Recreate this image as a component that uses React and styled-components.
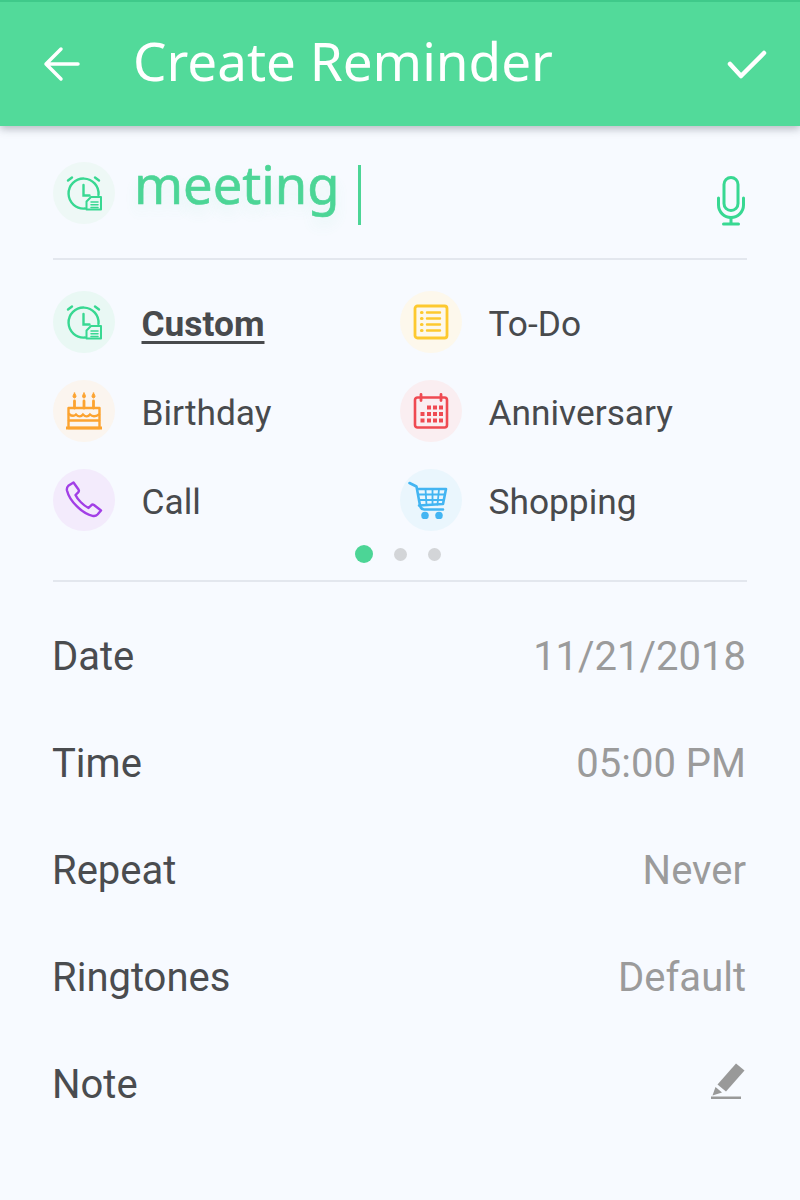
import styled, { createGlobalStyle } from "styled-components";

const GREEN = "#52da9a";

const types = [
    { label: "Custom", tint: "#e9f8f4", icon: "alarm", active: true },
    { label: "To-Do", tint: "#fdf8ec", icon: "todo" },
    { label: "Birthday", tint: "#fbf5ef", icon: "cake" },
    { label: "Anniversary", tint: "#faeef1", icon: "calendar" },
    { label: "Call", tint: "#f3ebfc", icon: "phone" },
    { label: "Shopping", tint: "#eaf6fd", icon: "cart" }
];

const settings = [
    { label: "Date", value: "11/21/2018" },
    { label: "Time", value: "05:00 PM" },
    { label: "Repeat", value: "Never" },
    { label: "Ringtones", value: "Default" }
];

const GlobalStyle = createGlobalStyle`
  html, body {
    margin: 0;
    padding: 0;
    background: #f7faff;
  }
`;

const AlarmIcon = ({ color = "#38d892", size = 36 }) => (
    <svg width={size} height={size} viewBox="0 0 36 36" fill="none" stroke={color} strokeWidth="2.400" strokeLinecap="round">
        <path d="M19 33.500A15 15 0 1 1 32.500 20" />
        <path d="M17.500 10v10.500h6" />
        <path d="M2 5.500 6 2.500M33 5.500 29 2.500" />
        <path d="M20.500 34.500v-8l4.500-4.500h10v12.500z" fill="#e9f8f4" strokeLinejoin="round" strokeWidth="2" />
        <path d="M25 27h7M25 29.800h7M25 32.500h7" strokeWidth="1.500" />
    </svg>
);

const TodoIcon = () => (
    <svg width="36" height="36" viewBox="0 0 36 36" fill="none" stroke="#fdc92f" strokeWidth="2.800" strokeLinecap="round">
        <rect x="2" y="2" width="32" height="32" rx="2.500" />
        <path d="M14 8.500h13M14 14.500h13M14 20.500h13M14 26.500h13" strokeWidth="2.400" />
        <path d="M8.500 8.500h.5M8.500 14.500h.5M8.500 20.500h.5M8.500 26.500h.5" strokeWidth="3.200" />
    </svg>
);

const CakeIcon = () => (
    <svg width="36" height="38" viewBox="0 0 36 38" fill="none" stroke="#fca32f" strokeWidth="2.400" strokeLinecap="round">
        <path d="M2.500 16h31v20h-31z" strokeLinejoin="round" />
        <path d="M3 22c3 2.500 5 2.500 7 .5 2.500 2.500 5 2.500 7 0 2.500 2.500 5 2.500 7 0 2.500 2.500 5 2.500 9 0" />
        <path d="M3 28.500h30" />
        <path d="M0.500 36h35" strokeWidth="3.200" />
        <path d="M8.500 16V9M18 16V9M27.500 16V9" strokeWidth="2.800" />
        <path d="M8.500 1c-2 3-2 4.500 0 5 2-.5 2-2 0-5zM18 1c-2 3-2 4.500 0 5 2-.5 2-2 0-5zM27.500 1c-2 3-2 4.500 0 5 2-.5 2-2 0-5z" fill="#fca32f" strokeWidth="1" />
    </svg>
);

const CalendarIcon = () => (
    <svg width="36" height="36" viewBox="0 0 36 36" fill="none" stroke="#ef4a52" strokeWidth="2.600" strokeLinecap="round">
        <rect x="2" y="4.500" width="32" height="30" rx="2.500" />
        <path d="M8 1.500v6M28 1.500v6" strokeWidth="2.800" />
        <g fill="#ef4a52" stroke="none">
            {[
                [14, 12.500], [20, 12.500], [26, 12.500],
                [7.500, 19], [14, 19], [20, 19], [26, 19],
                [7.500, 25.500], [14, 25.500], [20, 25.500], [26, 25.500]
            ].map(([x, y]) => (
                <rect key={`${x}-${y}`} x={x} y={y} width="4" height="4" />
            ))}
        </g>
    </svg>
);

const PhoneIcon = () => (
    <svg width="38" height="38" viewBox="0 0 38 38" fill="none" stroke="#a23fe6" strokeWidth="2.400" strokeLinejoin="round">
        <path d="M8.500 1.500 13.500 8.500c.6 1 .5 2-.3 2.800L10.500 14c2 4.500 8 10.500 13 13l2.700-2.700c.8-.8 1.800-.9 2.800-.3l7 5.500-3.500 4c-1.300 1.300-3 1.800-5 1.300C17 32.500 4.500 20 2 9.500 1.600 7.500 2 6 3.300 4.800z" />
    </svg>
);

const CartIcon = () => (
    <svg width="46" height="38" viewBox="0 0 46 38" fill="none" stroke="#43b5f2" strokeWidth="2.600" strokeLinecap="round" strokeLinejoin="round">
        <path d="M1.500 2l7 3.500 3.500 19c.4 2 1.500 4 4 4h19" />
        <path d="M10 8h28l-3 15-24 1.500" />
        <path d="M10.500 13.500h26M11.500 19h24M17.500 8l1 16M24.500 8v15.500M31 8l-1.500 15.500" strokeWidth="1.800" />
        <circle cx="17" cy="34.500" r="2.500" fill="#43b5f2" />
        <circle cx="31" cy="34.500" r="2.500" fill="#43b5f2" />
    </svg>
);

const typeIcons = {
    alarm: <AlarmIcon />,
    todo: <TodoIcon />,
    cake: <CakeIcon />,
    calendar: <CalendarIcon />,
    phone: <PhoneIcon />,
    cart: <CartIcon />
};

const App = () => {
    return (
        <Screen>
            <GlobalStyle />
            <Header>
                <svg width="38" height="36" viewBox="0 0 38 36" fill="none" stroke="#fff" strokeWidth="3.500" strokeLinecap="round" strokeLinejoin="round">
                    <path d="M35 18H3M18 3 3 18l15 15" />
                </svg>
                <Title>Create Reminder</Title>
                <svg width="40" height="29" viewBox="0 0 40 29" fill="none" stroke="#fff" strokeWidth="4.500" strokeLinecap="round" strokeLinejoin="round">
                    <path d="M3 14l11 12L37 3" />
                </svg>
            </Header>
            <Content>
                <InputRow>
                    <IconCircle $tint="#eef8f6"><AlarmIcon /></IconCircle>
                    <MeetingText>meeting</MeetingText>
                    <Caret />
                    <MicSlot>
                        <svg width="28" height="50" viewBox="0 0 28 50" fill="none" stroke="#38d892" strokeWidth="3" strokeLinecap="round">
                            <rect x="7" y="1.500" width="14" height="33" rx="7" />
                            <path d="M1.500 22v7a12.500 12.500 0 0 0 25 0v-7" />
                            <path d="M14 41.500v6.500M6.500 48h15" />
                        </svg>
                    </MicSlot>
                </InputRow>
                <TypesPanel>
                    <TypeGrid>
                        {types.map((t) => (
                            <TypeItem key={t.label}>
                                <IconCircle $tint={t.tint}>{typeIcons[t.icon]}</IconCircle>
                                <TypeLabel $active={t.active}>{t.label}</TypeLabel>
                            </TypeItem>
                        ))}
                    </TypeGrid>
                    <Dots>
                        <Dot $active />
                        <Dot />
                        <Dot />
                    </Dots>
                </TypesPanel>
                <SettingsList>
                    {settings.map((s) => (
                        <SettingRow key={s.label}>
                            <span>{s.label}</span>
                            <SettingValue>{s.value}</SettingValue>
                        </SettingRow>
                    ))}
                    <SettingRow>
                        <span>Note</span>
                        <NoteIcon width="36" height="38" viewBox="0 0 36 38" fill="#999">
                            <path d="M26 1.500l8.500 7L16 29.500l-8.500-7z" />
                            <path d="M5.500 25l6.500 5.500-9.500 3z" />
                            <rect x="1" y="34.500" width="30" height="2.500" />
                        </NoteIcon>
                    </SettingRow>
                </SettingsList>
            </Content>
        </Screen>
    );
};

const Screen = styled.div`
  width: 800px;
  height: 1200px;
  overflow: hidden;
  background: #f7faff;
`;

const Header = styled.header`
  box-sizing: border-box;
  height: 126px;
  padding: 0 33px 0 43px;
  display: flex;
  align-items: center;
  background: ${GREEN};
  border-top: 2px solid #3fc98a;
  box-shadow: 0 3px 8px rgba(60, 70, 80, 0.35);
`;

const Title = styled.h1`
  flex: 1;
  margin: 0 0 8px 52px;
  font-family: "Noto Sans", sans-serif;
  font-size: 53px;
  font-weight: 400;
  color: #ffffff;
`;

const Content = styled.main`
  padding: 0 53px;
`;

const InputRow = styled.div`
  box-sizing: border-box;
  height: 134px;
  padding-top: 36px;
  display: flex;
  align-items: flex-start;
  border-bottom: 2px solid #e3e7ee;
`;

const IconCircle = styled.div`
  flex: none;
  width: 62px;
  height: 62px;
  border-radius: 50%;
  background: ${({ $tint }) => $tint};
  display: flex;
  align-items: center;
  justify-content: center;
`;

const MeetingText = styled.div`
  margin: -12px 0 0 19px;
  font-family: "Noto Sans", sans-serif;
  font-size: 52.500px;
  line-height: 68px;
  color: #4cd596;
  -webkit-text-stroke: 0.6px #4cd596;
  text-shadow: 0 8px 14px rgba(80, 215, 155, 0.12);
`;

const Caret = styled.div`
  width: 3px;
  height: 60px;
  margin: 3px 0 0 18px;
  background: #4cd596;
`;

const MicSlot = styled.div`
  margin: 14px 2px 0 auto;
`;

const TypesPanel = styled.section`
  box-sizing: border-box;
  height: 322px;
  padding-top: 31px;
  border-bottom: 2px solid #e3e7ee;
`;

const TypeGrid = styled.div`
  display: grid;
  grid-template-columns: 347px 1fr;
  row-gap: 27px;
`;

const TypeItem = styled.div`
  display: flex;
  align-items: center;
  gap: 26.500px;
`;

const TypeLabel = styled.span`
  padding-top: 3px;
  font-family: "Roboto", sans-serif;
  font-size: 35.300px;
  font-weight: ${({ $active }) => ($active ? 700 : 400)};
  color: #484a4d;
  text-decoration: ${({ $active }) => ($active ? "underline" : "none")};
  text-underline-offset: 5px;
`;

const Dots = styled.div`
  margin-top: 13px;
  height: 20px;
  display: flex;
  align-items: center;
  justify-content: center;
  gap: 21px;
  padding-right: 4px;
`;

const Dot = styled.span`
  width: ${({ $active }) => ($active ? "18px" : "13px")};
  height: ${({ $active }) => ($active ? "18px" : "13px")};
  border-radius: 50%;
  background: ${({ $active }) => ($active ? "#4cd596" : "#d3d5d8")};
`;

const SettingsList = styled.section`
  padding-top: 21px;
`;

const SettingRow = styled.div`
  height: 107px;
  margin: 0 1px 0 -1px;
  display: flex;
  align-items: center;
  justify-content: space-between;
  font-family: "Roboto", sans-serif;
  font-size: 40px;
  color: #4a4c4f;
`;

const SettingValue = styled.span`
  color: #9b9b9b;
`;

const NoteIcon = styled.svg`
  margin-bottom: 8px;
`;

export default App;
